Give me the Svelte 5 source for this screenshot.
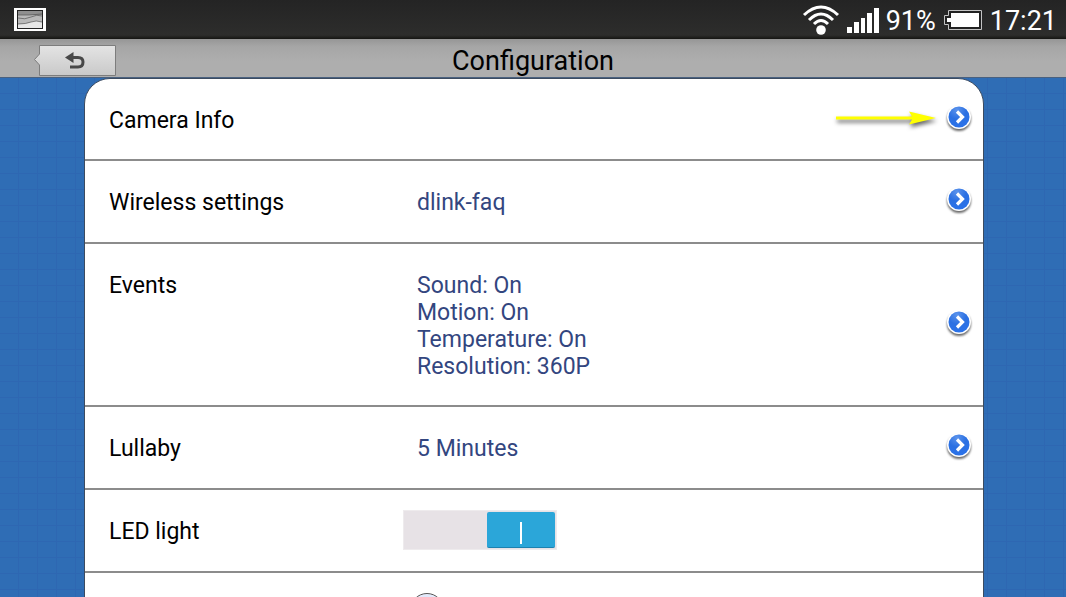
<script lang="ts">
  interface Item {
    label: string
    values: string[]
  }

  const items: Item[] = [
    { label: 'Camera Info', values: [] },
    { label: 'Wireless settings', values: ['dlink-faq'] },
    {
      label: 'Events',
      values: ['Sound: On', 'Motion: On', 'Temperature: On', 'Resolution: 360P']
    },
    { label: 'Lullaby', values: ['5 Minutes'] }
  ]

  let led = $state(true)
  let volume = $state(0)
</script>

<div class="screen">
  <div class="status">
    <svg class="picture" width="32" height="24" viewBox="0 0 32 24" aria-hidden="true">
      <rect width="32" height="23" fill="#fff" />
      <rect x="3.5" y="2.5" width="25" height="18" fill="#b9b9b9" stroke="#222" />
      <rect x="4" y="3" width="24" height="4" fill="#8f8f8f" />
      <path d="M4 16 Q12 16 17 14 T28 14 V20 H4Z" fill="#e6e6e6" />
      <path d="M4 7 H15 L28 6 M4 10 Q11 12 17 9 T28 8 M4 16 Q12 16 17 14 T28 14" fill="none" stroke="#555" stroke-width=".7" />
    </svg>
    <svg class="wifi" width="38" height="32" viewBox="0 0 38 32" aria-hidden="true">
      <g fill="none" stroke="#fff" stroke-width="3">
        <path d="M2 11 Q19 -5 36 11" />
        <path d="M7 16 Q19 4 31 16" />
        <path d="M12 20 Q19 13 26 20" />
      </g>
      <circle cx="19" cy="26" r="4.8" fill="#fff" />
    </svg>
    <svg class="signal" width="32" height="25" viewBox="0 0 32 25" fill="#fff" aria-hidden="true">
      <rect y="19" width="5" height="6" />
      <rect x="7" y="14" width="5" height="11" />
      <rect x="14" y="10" width="4" height="15" />
      <rect x="20" y="5" width="5" height="20" />
      <rect x="27" width="5" height="25" />
    </svg>
    <span>91%</span>
    <svg class="battery" width="38" height="20" viewBox="0 0 38 20" aria-hidden="true">
      <path d="M4.5 .5 H37.5 V19.5 H4.5 V14.5 H.5 V5.5 H4.5Z" fill="#222" stroke="#c4c4c4" />
      <path d="M7 3 H35 V17 H7 V12 H3 V8 H7Z" fill="#fff" />
    </svg>
    <span>17:21</span>
  </div>

  <header>
    <button type="button" class="back" aria-label="Back">
      <svg width="84" height="33" viewBox="0 0 84 33" aria-hidden="true">
        <defs>
          <linearGradient id="face" x2="0" y2="1">
            <stop stop-color="#e4e4e4" />
            <stop offset="1" stop-color="#c9c9c9" />
          </linearGradient>
        </defs>
        <path d="M6.500 1.500 H82.500 V31.500 H6.500 V21 L1.500 15.500 L6.500 10Z" fill="url(#face)" stroke="#7d7d7d" />
        <path d="M37 23 H45 Q50 23 50 18 Q50 13.500 45 13.500 H39" fill="none" stroke="#484848" stroke-width="3" />
        <path d="M32 13.500 L40.500 8 V19Z" fill="#484848" />
      </svg>
    </button>
    <h1>Configuration</h1>
  </header>

  <main>
    <ul>
      {#each items as item (item.label)}
        <li>
          <span>{item.label}</span>
          <div class="values">
            {#each item.values as value (value)}
              <div>{value}</div>
            {/each}
          </div>
          <button type="button" class="open" aria-label="Open {item.label}">
            <svg width="30" height="32" viewBox="0 0 30 32" aria-hidden="true">
              <defs>
                <radialGradient id="ball" cx=".4" cy=".15" r=".9">
                  <stop stop-color="#5b93ec" />
                  <stop offset=".5" stop-color="#2b70e2" />
                  <stop offset="1" stop-color="#2a72ea" />
                </radialGradient>
              </defs>
              <circle class="ring" cx="15" cy="13" r="12" fill="#fff" />
              <circle cx="15" cy="13" r="10.500" fill="url(#ball)" />
              <path d="M13 7.500 L18.500 13 L13 18.500" fill="none" stroke="#fff" stroke-width="3.200" />
            </svg>
          </button>
          {#if item.label === 'Camera Info'}
            <svg class="pointer" width="104" height="24" viewBox="0 0 104 24" aria-hidden="true">
              <path d="M2 9.500 H78 L75 4.500 L102 11 L75 17.500 L78 12.500 H2Z" fill="#ff0" />
            </svg>
          {/if}
        </li>
      {/each}
      <li>
        <label for="led">LED light</label>
        <input id="led" class="switch" type="checkbox" role="switch" bind:checked={led} />
      </li>
      <li>
        <input class="slider" type="range" min="0" max="10" aria-label="Volume" bind:value={volume} />
      </li>
    </ul>
  </main>
</div>

<style>
  :global(body) {
    overflow: hidden;
  }
  .screen {
    height: 100vh;
    display: flex;
    flex-direction: column;
    overflow: hidden;
    font-family: Roboto, 'Liberation Sans', sans-serif;
    font-size: 23px;
    line-height: 27px;
    color: #000;
  }
  .status {
    flex: none;
    height: 39px;
    box-sizing: border-box;
    padding: 1px 9px 0 14px;
    display: flex;
    align-items: center;
    background: linear-gradient(#242424, #2d2d2c 90%, #151512);
    color: #fff;
    font-size: 27px;
  }
  .status span {
    padding-top: 2px;
  }
  .picture {
    margin-right: auto;
  }
  .signal {
    margin: 0 7px;
  }
  .battery {
    margin: 0 8px;
  }
  header {
    flex: none;
    position: relative;
    height: 39px;
    box-sizing: border-box;
    border-bottom: 1px solid #4a617f;
    background: linear-gradient(#969696, #a6a6a6 20%, #aeaeae 60%);
    display: flex;
    align-items: center;
    justify-content: center;
  }
  h1 {
    margin: 0;
    padding-top: 6px;
    font-size: 27px;
    font-weight: 400;
  }
  button {
    border: none;
    padding: 0;
    background: none;
    cursor: pointer;
  }
  button svg {
    display: block;
  }
  .back {
    position: absolute;
    left: 33px;
    bottom: 0;
  }
  main {
    flex: 1;
    min-height: 0;
    padding: 0 82px 0 84px;
    background:
      repeating-linear-gradient(90deg, transparent 0 18px, #2e67b2 18px 19px),
      repeating-linear-gradient(transparent 0 15px, #2e67b2 15px 16px),
      #2f6db5;
  }
  ul {
    list-style: none;
    margin: 0;
    padding: 0;
    border: 1px solid #3c4b60;
    border-radius: 26px 26px 0 0;
    background: #fff;
  }
  li {
    position: relative;
    display: grid;
    grid-template-columns: 294px 1fr 30px;
    align-items: start;
    min-height: 83px;
    box-sizing: border-box;
    padding: 28px 9px 25px 24px;
    border-bottom: 2px solid #8c8c8c;
  }
  li:first-child {
    min-height: 82px;
  }
  .values {
    padding-left: 14px;
    color: #33467f;
  }
  .open {
    align-self: center;
    margin: -5px 0 -3px;
  }
  .ring {
    filter: drop-shadow(0 2px 1px rgba(0, 0, 0, 0.6));
  }
  .pointer {
    position: absolute;
    right: 45px;
    top: 28px;
    filter: drop-shadow(1px 3px 2px rgba(0, 0, 0, 0.6));
  }
  .switch {
    appearance: none;
    width: 154px;
    height: 40px;
    margin: -8px 0;
    padding: 1px;
    box-sizing: border-box;
    display: flex;
    background: #e7e2e6;
    border: 1px solid #eeebed;
    cursor: pointer;
  }
  .switch::before {
    content: '';
    width: 68px;
    box-sizing: border-box;
    border-radius: 2px;
    border-bottom: 1px solid #1d82b0;
    background: linear-gradient(#fff, #fff) center 10px / 2px 22px no-repeat #2ba6d9;
  }
  .switch:checked::before {
    margin-left: auto;
  }
  .slider {
    appearance: none;
    grid-column: 2;
    width: 280px;
    height: 34px;
    margin: -8px 0 0 7px;
    background: linear-gradient(#bbb, #bbb) center / 100% 6px no-repeat;
  }
  .slider::-webkit-slider-thumb {
    appearance: none;
    width: 34px;
    height: 34px;
    box-sizing: border-box;
    border: 1px solid #555;
    border-radius: 50%;
    background: radial-gradient(#cddafa 40%, #dfe7fb 60%, #fff);
  }
</style>
